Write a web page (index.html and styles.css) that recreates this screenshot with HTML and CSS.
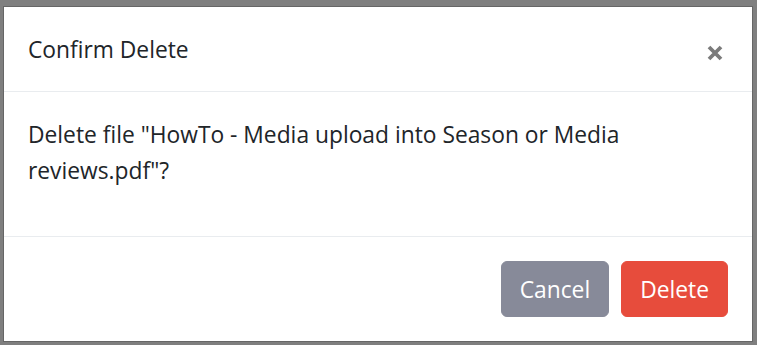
FILE: index.html
```html
<!DOCTYPE html>
<html lang="en">
<head>
<meta charset="utf-8">
<title>Confirm Delete</title>
<link rel="stylesheet" href="styles.css">
</head>
<body>
<div class="backdrop">
  <div class="modal" role="dialog" aria-labelledby="modal-title">
    <div class="modal-header">
      <h5 class="modal-title" id="modal-title">Confirm Delete</h5>
      <button class="close" type="button" aria-label="Close">
        <svg width="16" height="16" viewBox="0 0 16 16" aria-hidden="true">
          <path d="M2 2 L14 14 M14 2 L2 14" stroke="#7b7b7b" stroke-width="3.8" stroke-linecap="butt" fill="none"/>
        </svg>
      </button>
    </div>
    <div class="modal-body">
      <p class="message">Delete file "HowTo - Media upload into Season or Media reviews.pdf"?</p>
    </div>
    <div class="modal-footer">
      <button class="btn btn-secondary" type="button">Cancel</button>
      <button class="btn btn-danger" type="button">Delete</button>
    </div>
  </div>
</div>
</body>
</html>
```
FILE: styles.css
```css
html, body {
  margin: 0;
  padding: 0;
  height: 100%;
}

body {
  background: #7f7f7f;
  font-family: "Open Sans", "Noto Sans", sans-serif;
  font-size: 22.8px;
  line-height: 36px;
  color: #212529;
}

.backdrop {
  padding: 6px 0 0 3px;
  display: flex;
  align-items: flex-start;
}

.modal {
  width: 750px;
  box-sizing: border-box;
  background: #fff;
  border: 1px solid #666;
  display: flex;
  flex-direction: column;
}

.modal-header {
  display: flex;
  justify-content: space-between;
  align-items: flex-start;
  padding: 25px 24px 23px;
  border-bottom: 1px solid #e9ecef;
}

.modal-title {
  margin: 0;
  font-size: 22.8px;
  font-weight: 400;
  line-height: 36px;
}

.close {
  border: 0;
  background: transparent;
  padding: 0;
  margin: 13px 5px 0 0;
  width: 16px;
  height: 16px;
  display: block;
  cursor: pointer;
}

.close svg {
  display: block;
}

.modal-body {
  padding: 25px 24px 23px;
}

.message {
  margin: 0 0 24px;
}

.modal-footer {
  display: flex;
  justify-content: flex-end;
  align-items: center;
  gap: 12px;
  padding: 24px;
  border-top: 1px solid #e9ecef;
}

.btn {
  font-family: inherit;
  font-size: 22.8px;
  line-height: 36px;
  padding: 10px 18px 8px;
  border: 1px solid transparent;
  border-radius: 6px;
  color: #fff;
  cursor: pointer;
}

.btn-secondary {
  background: #878a99;
  border-color: #878a99;
}

.btn-danger {
  background: #e74c3c;
  border-color: #e74c3c;
}
```
